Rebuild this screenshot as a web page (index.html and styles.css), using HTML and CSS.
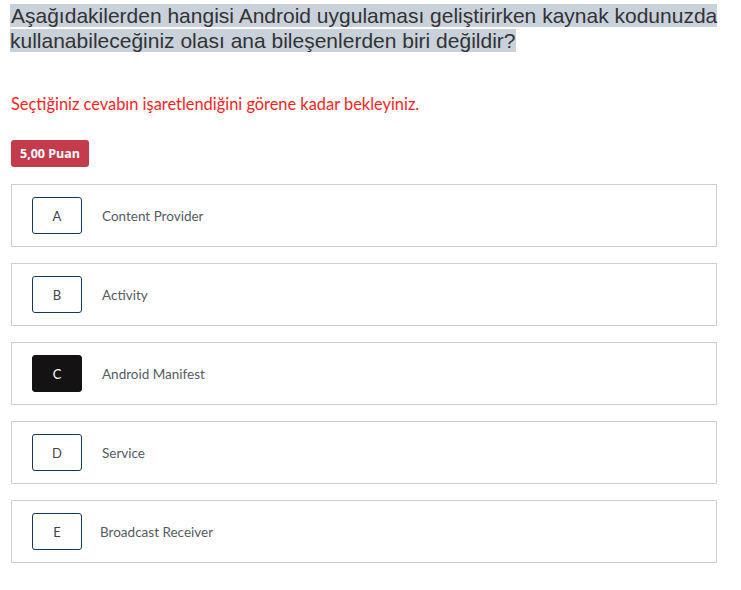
FILE: index.html
```html
<!DOCTYPE html>
<html lang="tr">
<head>
<meta charset="utf-8">
<link rel="stylesheet" href="styles.css">
</head>
<body>
<div class="page">
  <h1 class="question"><span class="sel">Aşağıdakilerden hangisi Android uygulaması geliştirirken kaynak kodunuzda kullanabileceğiniz olası ana bileşenlerden biri değildir?</span></h1>
  <p class="warn">Seçtiğiniz cevabın işaretlendiğini görene kadar bekleyiniz.</p>
  <div class="badge">5,00 Puan</div>
  <div class="options">
    <div class="option"><div class="letter">A</div><div class="label">Content Provider</div></div>
    <div class="option"><div class="letter">B</div><div class="label">Activity</div></div>
    <div class="option"><div class="letter selected">C</div><div class="label">Android Manifest</div></div>
    <div class="option"><div class="letter">D</div><div class="label">Service</div></div>
    <div class="option"><div class="letter">E</div><div class="label l-e">Broadcast Receiver</div></div>
  </div>
</div>
</body>
</html>
```

FILE: styles.css
```css
html, body { margin: 0; padding: 0; background: #fff; }
.page {
  padding: 4px 24px 0 11px;
  font-family: Lato, "Open Sans", sans-serif;
}
.question {
  margin: 0 -14px 0 -1px;
  font-family: "Liberation Sans", Arial, sans-serif;
  font-weight: normal;
  font-size: 21px;
  line-height: 24.5px;
  color: #333;
}
.sel {
  background: #c9d1db;
  padding: 0 0 0 1px;
}
.warn {
  margin: 41px 0 0 0;
  color: #ff1f1f;
  font-size: 16.4px;
  line-height: 20px;
}
.badge {
  display: inline-block;
  margin-top: 26px;
  background: #c43c4c;
  color: #fff;
  font-family: "Open Sans", sans-serif;
  font-weight: bold;
  font-size: 12.5px;
  line-height: 27px;
  height: 27px;
  padding: 0 9px;
  border-radius: 3px;
}
.options {
  display: flex;
  flex-direction: column;
  gap: 16px;
  margin-top: 17px;
}
.option {
  height: 61px;
  border: 1px solid #cfcfcf;
  display: flex;
  align-items: center;
  padding-left: 20px;
}
.letter {
  width: 48px;
  height: 35px;
  border: 1px solid #123a5c;
  border-radius: 3px;
  display: flex;
  align-items: center;
  justify-content: center;
  font-size: 13px;
  color: #444;
}
.letter.selected {
  background: #141213;
  border-color: #141213;
  color: #fff;
}
.label {
  margin-left: 20px;
  font-size: 13.5px;
  color: #555b63;
}
.l-e { margin-left: 18px; }
```
